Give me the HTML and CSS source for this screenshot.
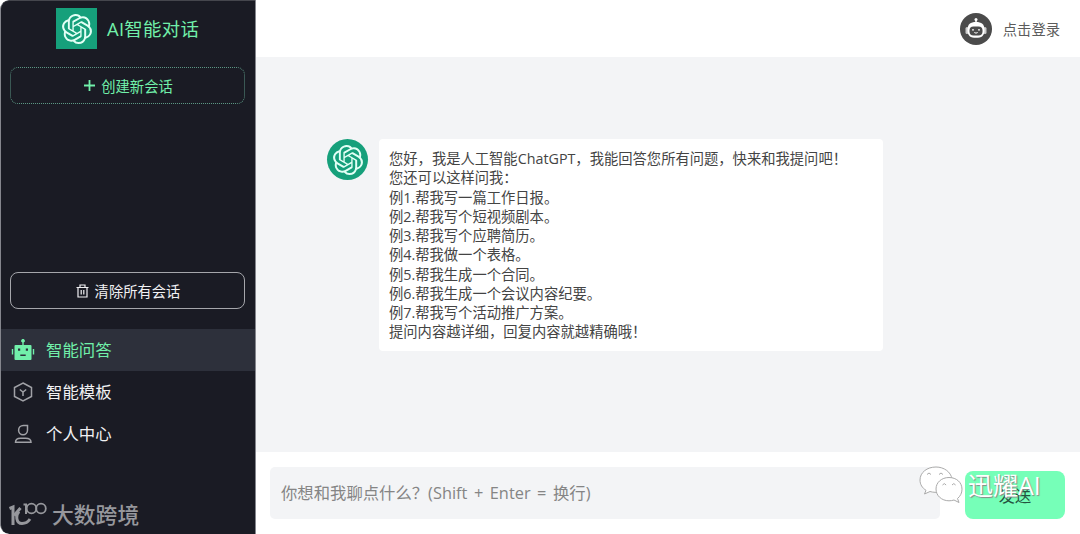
FILE: index.html
```html
<!DOCTYPE html>
<html lang="zh-CN">
<head>
    <meta charset="UTF-8">
    <meta name="viewport" content="width=device-width, initial-scale=1.0">
    <title>AI智能对话</title>
    <link rel="stylesheet" href="styles.css">
</head>
<body>
    <!-- Shared logo shape -->
    <svg class="defs" width="0" height="0">
        <symbol id="gpt" viewBox="0 0 24 24">
            <path d="M22.2819 9.8211a5.9847 5.9847 0 0 0-.5157-4.9108 6.0462 6.0462 0 0 0-6.5098-2.9A6.0651 6.0651 0 0 0 4.9807 4.1818a5.9847 5.9847 0 0 0-3.9977 2.9 6.0462 6.0462 0 0 0 .7427 7.0966 5.98 5.98 0 0 0 .511 4.9107 6.051 6.051 0 0 0 6.5146 2.9001A5.9847 5.9847 0 0 0 13.2599 24a6.0557 6.0557 0 0 0 5.7718-4.2058 5.9894 5.9894 0 0 0 3.9977-2.9001 6.0557 6.0557 0 0 0-.7475-7.0729zm-9.022 12.6081a4.4755 4.4755 0 0 1-2.8764-1.0408l.1419-.0804 4.7783-2.7582a.7948.7948 0 0 0 .3927-.6813v-6.7369l2.02 1.1686a.071.071 0 0 1 .038.052v5.5826a4.504 4.504 0 0 1-4.4945 4.4944zm-9.6607-4.1254a4.4708 4.4708 0 0 1-.5346-3.0137l.142.0852 4.783 2.7582a.7712.7712 0 0 0 .7806 0l5.8428-3.3685v2.3324a.0804.0804 0 0 1-.0332.0615L9.74 19.9502a4.4992 4.4992 0 0 1-6.1408-1.6464zM2.3408 7.8956a4.485 4.485 0 0 1 2.3655-1.9728V11.6a.7664.7664 0 0 0 .3879.6765l5.8144 3.3543-2.0201 1.1685a.0757.0757 0 0 1-.071 0l-4.8303-2.7865A4.504 4.504 0 0 1 2.3408 7.872zm16.5963 3.8558L13.1038 8.364 15.1192 7.2a.0757.0757 0 0 1 .071 0l4.8303 2.7913a4.4944 4.4944 0 0 1-.6765 8.1042v-5.6772a.79.79 0 0 0-.407-.667zm2.0107-3.0231l-.142-.0852-4.7735-2.7818a.7759.7759 0 0 0-.7854 0L9.409 9.2297V6.8974a.0662.0662 0 0 1 .0284-.0615l4.8303-2.7866a4.4992 4.4992 0 0 1 6.6802 4.66zM8.3065 12.863l-2.02-1.1638a.0804.0804 0 0 1-.038-.0567V6.0742a4.4992 4.4992 0 0 1 7.3757-3.4537l-.142.0805L8.704 5.459a.7948.7948 0 0 0-.3927.6813zm1.0976-2.3654l2.602-1.4998 2.6069 1.4998v2.9994l-2.5974 1.4997-2.6067-1.4997Z"/>
        </symbol>
    </svg>

    <div class="app">
        <aside class="sidebar">
            <div class="brand">
                <div class="logo"><svg><use href="#gpt"/></svg></div>
                <h1>AI智能对话</h1>
            </div>
            <button class="side-button new-chat">
                <svg width="11" height="11" viewBox="0 0 11 11"><path d="M5.5 0v11M0 5.5h11"/></svg>
                <span>创建新会话</span>
            </button>

            <div class="chat-list"></div>

            <button class="side-button clear-chat">
                <svg width="13" height="14" viewBox="0 0 13 14"><path d="M.5 3.5h12M4 3.5V1h5v2.500M2 3.500V13h9V3.500M5.200 6v4.500M7.800 6v4.500"/></svg>
                <span>清除所有会话</span>
            </button>

            <nav class="menu">
                <a class="menu-item active">
                    <svg width="24" height="22" viewBox="0 0 24 22">
                        <path fill="currentColor" fill-rule="evenodd" d="M11.300 6V3.500a1.800 1.800 0 1 1 1.400 0V6h6.800a1 1 0 0 1 1 1v13a1 1 0 0 1-1 1h-15a1 1 0 0 1-1-1V7a1 1 0 0 1 1-1zM7 9.500v2.200H9.200V9.500zM14.800 9.500v2.200h2.200V9.500zM9.300 15.500v1.500h5.400v-1.500zM.8 10H2.200v5.500H.8zM21.800 10h1.400v5.500h-1.400z"/>
                    </svg>
                    <span>智能问答</span>
                </a>
                <a class="menu-item">
                    <svg class="line" width="24" height="22" viewBox="0 0 24 22">
                        <path d="M12 2l8.500 4.500v9L12 20l-8.500-4.500v-9zM8.800 8.500L12 11l3.200-2.500M12 11v4"/>
                    </svg>
                    <span>智能模板</span>
                </a>
                <a class="menu-item">
                    <svg class="line" width="24" height="22" viewBox="0 0 24 22">
                        <path d="M16.500 2.500H12.300A4.700 4.700 0 0 0 7.600 7.200a4.450 4.450 0 0 0 8.900 0zM4.500 19.300c0-2.800 2.500-4 5-4h5c2.800 0 5.500 1.200 5.500 4z"/>
                    </svg>
                    <span>个人中心</span>
                </a>
            </nav>
        </aside>

        <main class="main">
            <header class="topbar">
                <svg width="32" height="32" viewBox="0 0 32 32">
                    <circle cx="16" cy="16" r="16" fill="#4b4b4b"/>
                    <path d="M16 9V6" stroke="#fff" stroke-width="1.500"/>
                    <circle cx="16" cy="6.500" r="1.500" fill="#fff"/>
                    <rect x="5.500" y="14" width="3" height="7" rx="1.500" fill="#ccc"/>
                    <rect x="23.500" y="14" width="3" height="7" rx="1.500" fill="#ccc"/>
                    <path d="M7.500 17c0-6 3-8 8.500-8s8.500 2 8.500 8-3 7.800-8.500 7.800S7.500 23 7.500 17z" fill="#fff"/>
                    <rect x="9.500" y="13.500" width="13" height="9" rx="4" fill="#4b4b4b"/>
                    <circle cx="13" cy="16.800" r=".9" fill="#fff"/>
                    <circle cx="19" cy="16.800" r=".9" fill="#fff"/>
                    <path d="M14.300 19.500q1.700 1.300 3.400 0" fill="none" stroke="#fff"/>
                </svg>
                <span>点击登录</span>
            </header>

            <section class="chat">
                <div class="avatar"><svg><use href="#gpt"/></svg></div>
                <div class="message">
                    您好，我是人工智能ChatGPT，我能回答您所有问题，快来和我提问吧！<br>
                    您还可以这样问我：<br>
                    例1.帮我写一篇工作日报。<br>
                    例2.帮我写个短视频剧本。<br>
                    例3.帮我写个应聘简历。<br>
                    例4.帮我做一个表格。<br>
                    例5.帮我生成一个合同。<br>
                    例6.帮我生成一个会议内容纪要。<br>
                    例7.帮我写个活动推广方案。<br>
                    提问内容越详细，回复内容就越精确哦！
                </div>
            </section>

            <footer class="composer">
                <div class="input">你想和我聊点什么？(Shift + Enter = 换行)</div>
                <button class="send">发送</button>
            </footer>
        </main>
    </div>

    <!-- Watermarks -->
    <div class="mark mark-left">
        <svg width="38" height="26" viewBox="0 0 38 26">
            <path d="M.5 6.500L4 5v18" stroke-width="3"/>
            <path d="M11.500 6L5 13.500M10 9.500c-3.500 4-3 12 3 12 3.500 0 6-1.500 8-4.500" stroke-width="3"/>
            <path d="M14.500 2.500H17V12" stroke-width="2"/>
            <circle cx="22.500" cy="6.500" r="4.800" stroke-width="1.800"/>
            <circle cx="32" cy="6.500" r="4.800" stroke-width="1.800"/>
        </svg>
        <span>大数跨境</span>
    </div>
    <div class="mark mark-right">
        <svg width="44" height="38" viewBox="0 0 44 38">
            <path d="M17 1C8 1 1 6.500 1 14c0 4.500 2.300 8 6 10.300L5.500 28l5.500-2.500c3 1 7 1 10 .5L33 13C32 6 25 1 17 1z"/>
            <path d="M30 11.500c-7.500 0-13 5-13 11.500s5.500 11.800 13 11.800c1.800 0 3.500-.3 5-.8l5 2.500-1.500-4c2.800-2.200 4.500-5.500 4.500-9.300 0-6.700-5.500-11.700-13-11.700z"/>
            <path d="M8 8.500q2-3 4 0M20 8.500q2-3 4 0M23.500 19q1.800-2.800 3.600 0M33 19q1.800-2.800 3.600 0"/>
        </svg>
        <span>迅耀AI</span>
    </div>
</body>
</html>
```
FILE: styles.css
```css
* {
    box-sizing: border-box;
}

body {
    margin: 0;
    background-color: #fff;
    font-family: "Open Sans", "Noto Sans CJK SC", sans-serif;
}

button {
    font-family: inherit;
    padding: 0;
}

.defs {
    position: absolute;
}

.app {
    display: flex;
    height: 534px;
    border-radius: 9px;
    overflow: hidden;
}

.sidebar {
    display: flex;
    flex-direction: column;
    width: 256px;
    background-color: #1a1b24;
    border: 1px solid #85868d;
    border-top-color: #45464d;
    border-bottom: none;
    border-radius: 9px 0 0 9px;
}

.brand {
    display: flex;
    align-items: center;
    gap: 10px;
    margin: 7px 0 18px 55px;
}

.brand h1 {
    margin: 0;
    color: #71f0aa;
    font-size: 18.4px;
    font-weight: 400;
    line-height: 40px;
    letter-spacing: 0.3px;
}

.logo,
.avatar {
    display: flex;
    align-items: center;
    justify-content: center;
    flex: none;
    width: 41px;
    height: 41px;
    background-color: #16a07b;
}

.logo svg,
.avatar svg {
    width: 30px;
    height: 30px;
    fill: #e2fff5;
}

.side-button {
    display: flex;
    align-items: center;
    justify-content: center;
    gap: 6px;
    flex: none;
    height: 37px;
    margin: 0 10px 0 9px;
    background: none;
    border: 1px solid #a5a6ab;
    border-radius: 8px;
    color: #f1f1f3;
    font-size: 14.3px;
}

.side-button svg {
    fill: none;
    stroke: currentColor;
    stroke-width: 1.2;
}

.new-chat {
    border: 1px dotted #5b9683;
    color: #71f0aa;
    padding-left: 2px;
}

.new-chat svg {
    stroke-width: 1.8;
}

.clear-chat {
    padding-left: 1px;
}

.chat-list {
    height: 168px;
}

.menu {
    margin-top: 20px;
}

.menu-item {
    display: flex;
    align-items: center;
    gap: 11px;
    height: 42px;
    padding-left: 10px;
    color: #f1f1f3;
    font-size: 16.4px;
}

.menu-item span {
    padding-bottom: 2px;
}

.menu-item.active {
    background-color: #2d303b;
    color: #71f0aa;
}

.menu-item .line {
    fill: none;
    stroke: #a0a1a6;
    stroke-width: 1.5;
}

.main {
    display: flex;
    flex-direction: column;
    flex: 1;
}

.topbar {
    display: flex;
    align-items: center;
    justify-content: flex-end;
    gap: 11px;
    height: 57px;
    padding-right: 20px;
    background-color: #fff;
    color: #5c5c5c;
    font-size: 14.3px;
}

.chat {
    display: flex;
    align-items: flex-start;
    gap: 11px;
    flex: 1;
    padding: 82px 0 0 71px;
    background-color: #f3f4f6;
}

.avatar {
    border-radius: 50%;
}

.message {
    width: 504px;
    height: 212px;
    padding: 10px;
    background-color: #fff;
    border-radius: 4px;
    color: #444;
    font-size: 14.3px;
    line-height: 19.25px;
    white-space: nowrap;
}

.composer {
    display: flex;
    gap: 25px;
    height: 82px;
    padding: 15px 15px 15px 14px;
    background-color: #fff;
}

.input {
    width: 670px;
    height: 52px;
    padding-left: 11px;
    background-color: #f3f4f6;
    border-radius: 5px;
    color: #858585;
    font-size: 16.35px;
    line-height: 52px;
    word-spacing: 2.3px;
}

.send {
    width: 100px;
    height: 48px;
    margin-top: 4px;
    background-color: #76ffb8;
    border: none;
    border-radius: 8px;
    color: #24543f;
    font-size: 16.2px;
}

.mark {
    position: absolute;
    display: flex;
    align-items: center;
}

.mark svg {
    fill: none;
}

.mark-left {
    left: 9px;
    top: 499px;
    gap: 5px;
    color: #96979c;
    font-size: 21.8px;
    font-weight: 500;
    line-height: 32px;
}

.mark-left svg {
    stroke: #96979c;
}

.mark-right {
    left: 919px;
    top: 466px;
    gap: 5px;
    color: #fff;
    font-size: 25px;
    line-height: 38px;
    text-shadow: 1px 1px 1px #888;
}

.mark-right svg {
    fill: #fff;
    stroke: #aaa;
}
```
